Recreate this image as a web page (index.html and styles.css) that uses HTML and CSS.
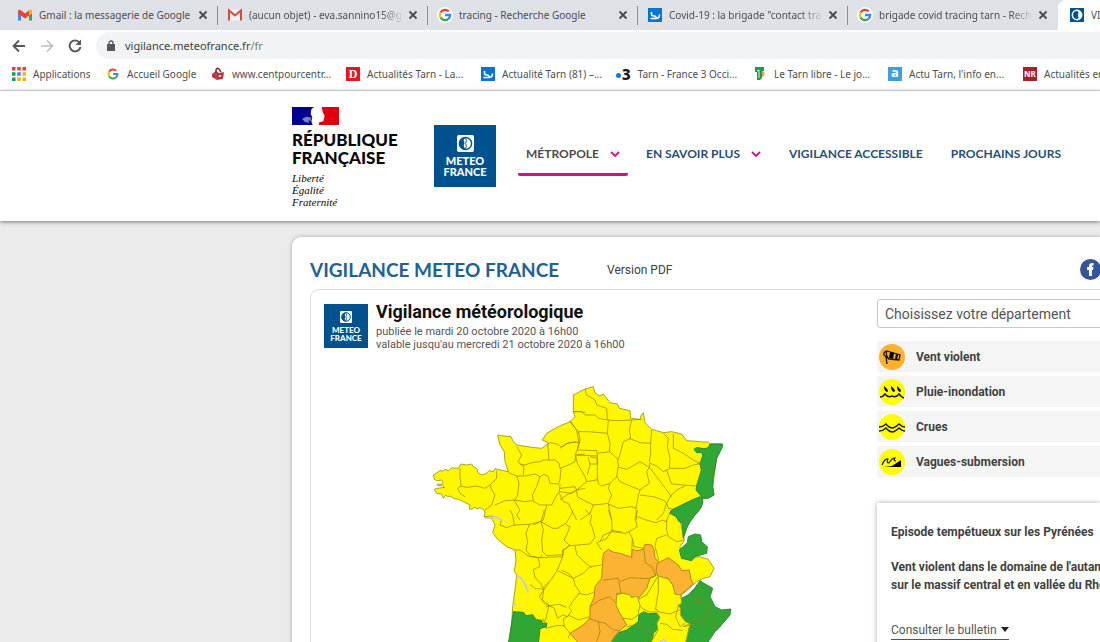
FILE: index.html
```html
<!DOCTYPE html>
<html lang="fr">
<head>
<meta charset="utf-8">
<title>Vigilance Météo France</title>
<link rel="stylesheet" href="styles.css">
</head>
<body>
<svg class="defs" width="0" height="0" aria-hidden="true">
  <symbol id="gmail" viewBox="0 0 14 11"><path d="M0 1.5V11h3V4z" fill="#4285f4"/><path d="M11 4v7h3V1.5z" fill="#34a853"/><path d="M0 1.5Q1-.5 3 1l4 3 4-3q2-1.500 3 .5V4L7 9 0 4z" fill="#ea4335"/><path d="M11 1q2-1.500 3 .5V4l-3 2z" fill="#fbbc04"/></symbol>
  <symbol id="gmail-red" viewBox="0 0 14 11"><path d="M2 0h10v11H2z" fill="#f4f1f1"/><path d="M1 11V1l6 5 6-5v10" fill="none" stroke="#d54b3d" stroke-width="2"/></symbol>
  <symbol id="google" viewBox="0 0 18 18"><circle cx="9" cy="9" r="9" fill="#fff"/><g fill="none" stroke-width="2.600"><path d="M13.200 5A5.800 5.800 0 0 0 4 6.200" stroke="#ea4335"/><path d="M4 6.200a5.800 5.800 0 0 0 0 5.600" stroke="#fbbc05"/><path d="M4 11.800a5.800 5.800 0 0 0 8.800 1.600" stroke="#34a853"/><path d="M12.800 13.400A5.800 5.800 0 0 0 14.800 9H9" stroke="#4285f4"/></g></symbol>
  <symbol id="depeche" viewBox="0 0 14 14"><path d="M0 0h14v14H0z" fill="#0874ce"/><path d="M3.500 4v2q0 2 2.500 2t2 2.500H2.500M8 10.500q3.500 0 3.500-4" fill="none" stroke="#fff" stroke-width="1.600"/></symbol>
  <symbol id="close" viewBox="0 0 10 10"><path d="M1.500 1.500l7 7m0-7l-7 7" stroke="#474b50" stroke-width="1.800"/></symbol>
  <symbol id="meteo" viewBox="0 0 18 18"><rect width="18" height="18" rx="2" fill="#fff"/><circle cx="9" cy="9" r="6.500" fill="none" stroke="#00528f" stroke-width="1.500"/><path d="M9 2.500a6.500 6.500 0 0 0 0 13l-2-4 1-3-1-3z" fill="#00528f"/><path d="M9 3l1 3-1 3 1 3-1 3" fill="none" stroke="#00528f"/></symbol>
  <symbol id="chevron" viewBox="0 0 10 7"><path d="M1 1l4 4 4-4" fill="none" stroke="#d6127f" stroke-width="1.800"/></symbol>
</svg>

<div class="tabs">
  <div class="tab"><svg class="fav"><use href="#gmail"/></svg><span class="label">Gmail : la messagerie de Google</span><button class="x" aria-label="Fermer"><svg><use href="#close"/></svg></button></div>
  <div class="tab"><svg class="fav"><use href="#gmail-red"/></svg><span class="label fade">(aucun objet) - eva.sannino15@g</span><button class="x" aria-label="Fermer"><svg><use href="#close"/></svg></button></div>
  <div class="tab"><svg class="fav google"><use href="#google"/></svg><span class="label">tracing - Recherche Google</span><button class="x" aria-label="Fermer"><svg><use href="#close"/></svg></button></div>
  <div class="tab"><svg class="fav"><use href="#depeche"/></svg><span class="label fade">Covid-19 : la brigade "contact tra</span><button class="x" aria-label="Fermer"><svg><use href="#close"/></svg></button></div>
  <div class="tab"><svg class="fav google"><use href="#google"/></svg><span class="label fade">brigade covid tracing tarn - Rech</span><button class="x" aria-label="Fermer"><svg><use href="#close"/></svg></button></div>
  <div class="tab active"><svg class="fav" viewBox="0 0 18 18"><path d="M0 0h18v18H0z" fill="#00528f"/><circle cx="9" cy="9" r="6" fill="none" stroke="#fff" stroke-width="2"/><path d="M9 3a6 6 0 0 1 0 12l2-3-1-3 1-3z" fill="#fff"/></svg><span class="label">VIGILANCE</span></div>
</div>
<div class="toolbar">
  <button aria-label="Retour"><svg width="14" height="14" viewBox="0 0 14 14"><path d="M13 7H2m5-5.500L1.500 7 7 12.500" fill="none" stroke="#54585c" stroke-width="1.800"/></svg></button>
  <button aria-label="Avancer"><svg width="14" height="14" viewBox="0 0 14 14"><path d="M1 7h11M7 1.500L12.500 7 7 12.500" fill="none" stroke="#bcbec0" stroke-width="1.600"/></svg></button>
  <button aria-label="Actualiser"><svg width="14" height="14" viewBox="0 0 14 14"><path d="M11.500 3.500A5.500 5.500 0 1 0 12.500 8" fill="none" stroke="#54585c" stroke-width="1.900"/><path d="M13 .5V6H7.500z" fill="#54585c"/></svg></button>
  <div class="address"><svg width="8" height="11" viewBox="0 0 8 11"><path d="M0 4h8v7H0z" fill="#54585c"/><path d="M2 5V3a2 2 0 0 1 4 0v2" fill="none" stroke="#54585c" stroke-width="1.300"/></svg><span>vigilance.meteofrance.fr<i>/fr</i></span></div>
</div>
<nav class="bookmarks" aria-label="Favoris">
  <a href="#"><svg viewBox="0 0 12 12"><g fill="#db4437"><path d="M0 0h3v3H0zM4.500 0h3v3h-3zM9 0h3v3H9z"/></g><g fill="#0f9d58"><path d="M0 4.500h3v3H0zM0 9h3v3H0z"/></g><path d="M4.500 4.500h3v3h-3z" fill="#4285f4"/><path d="M9 4.500h3v3H9zM4.500 9h3v3h-3zM9 9h3v3H9z" fill="#f4b400"/></svg>Applications</a>
  <a href="#"><svg><use href="#google"/></svg>Accueil Google</a>
  <a href="#"><svg viewBox="0 0 14 14"><path d="M1 7l4-3 3 2 5-1-1 7-6 1-5-3z" fill="#c83b40"/><path d="M5 6V3q1-3 3-1l2 3" fill="none" stroke="#842a35" stroke-width="1.500"/><path d="M2 9l2 1M7 8l4-1v3L7 11z" fill="#f3c9c5" stroke="#6f3139"/></svg>www.centpourcentr...</a>
  <a href="#"><span class="badge red">D</span>Actualités Tarn - La...</a>
  <a href="#"><svg><use href="#depeche"/></svg>Actualité Tarn (81) –...</a>
  <a href="#"><span class="three">3</span>Tarn - France 3 Occi...</a>
  <a href="#"><svg viewBox="0 0 14 14"><path d="M2 0h9v4H9v7l-2 2H4V5H2z" fill="#169c53"/><path d="M9 4q4 1 2 5l-2 1z" fill="#eda33e"/><path d="M4 4l2-1v8" fill="none" stroke="#d8f2e2"/></svg>Le Tarn libre - Le jo...</a>
  <a href="#"><span class="badge blue">a</span>Actu Tarn, l'info en...</a>
  <a href="#"><span class="badge nr">NR</span>Actualités en direct</a>
</nav>

<header class="site-head">
  <div class="republic">
    <svg width="47" height="18" viewBox="0 0 141 54"><path d="M0 0h141v54H0z" fill="#fff"/><path d="M0 0h66l-8 7-2 14 5 10-3 12 4 11H0z" fill="#000091"/><path d="M30 36l12-7 18 3-5 5 5 5-11-2 4 7-15-2-4-5z" fill="#7d80c8"/><path d="M89 0h52v54H80l2-8 12-3 2-9 2-7-6-12z" fill="#e1000f"/></svg>
    <strong>RÉPUBLIQUE<br>FRANÇAISE</strong>
    <em>Liberté<br>Égalité<br>Fraternité</em>
  </div>
  <div class="logo"><svg><use href="#meteo"/></svg>METEO<br>FRANCE</div>
  <nav class="menu">
    <a href="#" class="current">MÉTROPOLE<svg><use href="#chevron"/></svg></a>
    <a href="#">EN SAVOIR PLUS<svg><use href="#chevron"/></svg></a>
    <a href="#">VIGILANCE ACCESSIBLE</a>
    <a href="#">PROCHAINS JOURS</a>
  </nav>
</header>

<main class="card">
  <div class="card-head">
    <h1>VIGILANCE METEO FRANCE</h1>
    <a href="#" class="pdf">Version PDF</a>
    <a href="#" class="fb" aria-label="Facebook"><svg width="21" height="21" viewBox="0 0 21 21"><circle cx="10.500" cy="10.500" r="10.500" fill="#36549a"/><path d="M9 17v-6H7V8h2V7q0-3.500 4.500-3V6.500Q12 6.200 12 7.500V8h1.500L13 11h-1v6z" fill="#fff"/></svg></a>
  </div>
  <div class="panel">
    <section class="left">
      <div class="map-head">
        <div class="logo small"><svg><use href="#meteo"/></svg>METEO<br>FRANCE</div>
        <div><h2>Vigilance météorologique</h2><p>publiée le mardi 20 octobre 2020 à 16h00<br>valable jusqu'au mercredi 21 octobre 2020 à 16h00</p></div>
      </div>
      <svg class="map" viewBox="0 0 945 792" role="img" aria-label="Carte de vigilance">
        <path class="y" d="M445 45L480 27 505 20 510 38 523 48 535 42 555 68 577 72 583 85 615 92 617 115 645 118 649 105 655 98 660 128 680 148 695 152 715 158 740 155 770 162 785 182 815 184 835 186 850 186 855 192 892 192 875 235 863 320 867 345 833 355 833 368 827 385 810 405 795 425 787 440 775 465 778 482 765 500 770 535 825 530 850 538 867 565 855 590 835 595 815 605 770 645 765 800 250 800 260 730 263 680 270 630 275 585 268 575 273 540 270 510 245 500 220 480 203 458 210 435 200 415 177 410 180 400 178 390 165 383 156 387 150 381 141 388 133 387 135 375 115 365 100 358 88 356 75 348 68 350 62 345 55 355 50 342 35 340 28 328 38 325 58 322 52 316 38 317 38 312 50 313 55 310 50 300 35 302 28 298 26 285 45 272 55 273 60 268 70 272 80 264 100 265 108 252 125 255 140 252 145 260 155 265 160 279 170 285 185 280 192 272 205 275 210 266 218 268 235 272 250 275 240 245 238 215 225 195 218 165 235 168 258 170 265 185 275 195 290 197 320 202 350 205 368 192 370 188 352 180 365 160 400 140 435 125 450 110 445 95z"/>
        <g class="lines">
          <path d="M445 95l20 0 15 2M435 125l20 25 7 40-7 25-5 10M368 192l10-4 20 5 12 8 20-12 15-2 20 0M368 192l4 48M275 200l15 25-10 20 5 7 15 3 20-7 25-3 10-5 17 0 18 0 12 10 3 15 25-10 20-10 2-20 28-3M285 252l12 8-2 25M250 278l25 10 25 0 30-6 15 8 12-7 13 7 5 20 25 2 5-12 3-35M345 290l-10 30-13 25 3 17M275 288l7 22-4 35-10 17M215 272v23l-20 20M105 265v25l3 28 17 4 30-4 25 7 15-10 3 10 12 20-10 30-20 15M108 318l-10 7 7 15 15 10M210 375l30-13 28-2 32 5 22-3 23 13 35 0 15-30 8-10 2-23M268 362l17 28-10 15 10 15M365 375l-10 45-30 15M403 335l37 5 15-10 25-5M403 340l12 25 15 5 25 50"/>
          <g transform="translate(405 0)"><path d="M75 27l5 18 25 15 5 15 30 10 2 35M40 95l25 0 10 10 30 0 10 10 27 5 33 2 40-2 30-2M30 122l20 28 5 5 30 0 57 5 3-40M55 155l5 25-8 30 58 2 2 16-62-3M142 160l8 30-2 25-36 5M148 215l24 20 3 25-5 30M215 120l-7 30 4 25-22 10-5 20-10 35M208 175l32 13 32 2 3-40M272 190v30l-4 25M175 262l25 6 15-8 25-15 28 17 2-12M310 160l15 15-3 25 8 35-2 30M340 162v43l30 15 30 20 20 10M268 248l22 10 20 17 20-10 45 0 25-10 25-5M0 205l20-15 30-5M47 228l5 22 23 40 5 15M85 232l5 23-8 30M90 230l22 5v17H88M112 228v67l-2 5-30 5M112 295l3 15 10 8 25-8 22-22M170 290l10 15 35 15 25 10 10-8 18-12-8-35 8-13M45 320l5 10 30-25M50 330l2 20 18 10 30 15 45-5 10-25-10-20 5-15M145 372l30 13 40-5 13 5 7-40 5-15M268 262l22 28 15 20 15 20 15 20M240 345l40 5 30 10 10 10M320 270l10 30 5 12 35 3 40 3 5-18M320 370l12-22 18-18 25-12M320 370l5 15 20 3M0 325l45-5M0 360l20-15 30-15M100 375l-10 25-30 20M145 372l10 48M228 385l2 35M320 370l-10 30-20 20"/></g>
          <g transform="translate(165 390)"><path d="M12 20l25-2 28 10-5 17 20 8 23-8-5-30-8-15M103 45l45-2 35-8 10-35M148 43l-10 27 5 25-5 25 15 20 28 3 5-8M183 35l7 25-5 30 3 35 12 12 50-3 0-12 20-17M183 35l35 20 15 0 25-15 15-25 6-15M258 45l12 5-10 25-8 15 18 17 35-3 25-2 15-20-8-30-7-15 5-20-20-18M350 98l30-12 15-25 30 5M350 98l15 22M105 120l15 0 25 18 30 5 5 27-20 8 5 25 17 17 8 18-25-3-15-12M180 143l68-3-18 45-18 25-20 20M248 140l0-20 22-13M245 180l20 10 15 15 30-15 20-20 35-5M285 108l5 25 20 20 25 20M235 183l45 22 5 20 15 22-20 25-13 20 8 10-12 18-15-5-15 10-10-30-30-15-15-20 20-30 10-12M192 230l-5 40 20 15-10 45-15 8M197 290l40-8 22 10M187 325l10 15 1 15 30-8 25 0-3-20 15-10M250 345l20 25-5 15M265 315l30 15 34-10M295 250l25 5 25-10"/></g>
          <g transform="translate(525 390)"><path d="M25 0l10 30 2 35-27 10-10 20M37 65l40 5 10-5 25-15-7-25 8-25M87 65l10 20-2 55M97 85l5 25 30 5M113 20l25 10 30 8 20-8 10 5 15-35M200 30l0 30 5 20 25 15 22-5M200 75l-30 10-5 25 10 35-7 20 10 5M220 0l5 20 15 10 10 50M180 340l20 3 18 15 30 3 10-10M195 315l5 15"/></g>
        </g>
        <g class="g">
          <path d="M855 192L892 192 892 202 875 235 870 262 865 290 863 320 867 345 850 355 833 355 829 349 813 330 817 310 829 270 825 250 834 225 828 217 815 218 807 208 815 202 835 206 849 204z"/>
          <path d="M790 365l12-6 23-9 8 5v13l-6 17-17 20-15 20-8 15-12 35-3-45-12-7-5-13-20-10 5-10z"/>
          <path d="M763 510l24-22 3-18 20-8 17 3 3 20 17 15-2 20-20 5-15 5-10 12-30-7z"/>
          <path d="M756 675l14-20 22-12 18-20 15-21 15 10 23 13-8 25 15 30 20 10 27-3-2 18-30 35-15 15-25 37H775l5-56-15-20 5-20z"/>
          <path d="M545 792l35-34 25-8 35-25 2-20 13-10 15 6 30-1 8 25-8 20-15 15-4 26-21-3-20 9z"/>
          <path d="M265 695l30 2 8 10 20-3 10 15 17 2 1 10 15-2-2 11-19 6-5 46H250l10-62z"/>
        </g>
        <g class="o">
          <path d="M535 520l15-12 16 9 19 3 35 12 2-24 14 4 19-4 5-15 20 2 7 15 3 25 10 10-3 27-7 16-15 7-10 30-25 30-15-3-25-12h-25v40l15 30 15 25-20 15-20 25-10 17h-91l-29-32 40-25 20-20v-35l13-30 2-30 20-25 2-35z"/>
          <path d="M697 550l33-17 30 22 10 17 23-2 4 25 8 17-20 18-20 15-15-3-7-27-13-20-30-5-7-18z"/>
        </g>
        <path class="y" d="M635 660l30-15 18-30 15-25 2-2 30 9 13 18 7 27 17 3 3 25-10 5 6 10v20l15 20 15 7-5 15-10 45H675l24-41-3-20 9-20-12-15-23-1-15-8-14-12z"/>
        <path class="y" d="M575 645l16-5 24 4 4 9 18-5 8 28-5 20 2 7-20 15-28-3-12-20-9-20z"/>
        <g class="lines" transform="translate(525 390)"><path d="M10 210l45-5 8 45M60 215l30-12 55 3 25-10M132 118l4 40 20 13 10 25M0 270l28-10 20 20M-30 290l30-20M-5 335l20 5 25 20 20 2M-35 325l30 10 5 30-10 30M175 200v45l-8 50 8 12M165 295l10 10 35 7 28-12M180 340l20 3 18 15 30 3M235 285l-8 35 13 30 15-10M245 295l25-15 60-7M330 273l-5 25 15 25 5 40M325 310l-25 18-50 22M250 350l35-8 25-10 18 3 12 20M80 350l25-5 25 10 25 30M305 255l-5 20M300 250l-8 22M292 -140l23 15 25 10"/></g>
        <path class="coast" d="M275 585l17 13 10 20 8 20M180 415l32-4 20 10M263 677l12-5M705 784l12-5 6 7"/>
      </svg>
    </section>
    <section class="right">
      <select aria-label="Département"><option>Choisissez votre département</option></select>
      <ul>
        <li><svg viewBox="0 0 26 26"><circle cx="13" cy="13" r="13" fill="#fdb12d"/><g fill="none" stroke="#171717" stroke-width="1.300"><path d="M8 7l13 4-1 5-10-1-5-4q-1-3 3-4zM8 7q-2 4 2 8M7 13l1 7"/></g><path d="M11 8l4 1-1 6-4-1zM17 10l2 1-1 5-2-1z"/></svg>Vent violent</li>
        <li><svg viewBox="0 0 26 26"><circle cx="13" cy="13" r="13" fill="#ff0"/><path d="M5 7q6 5 3 6-3-1-3-6M12 7q6 5 3 6-3-1-3-6M18 7q6 5 3 6-3-1-3-6"/><path d="M1 18q3 0 5-3 3 4 7 2 4 2 7-2 2 3 5 4" fill="none" stroke="#171717" stroke-width="1.400"/></svg>Pluie-inondation</li>
        <li><svg viewBox="0 0 26 26"><circle cx="13" cy="13" r="13" fill="#ff0"/><path d="M0 13q4 0 7-3 3 4 7 4 3-1 6-4 3 3 6 3M0 17q4 0 7-3 3 4 7 4 3-1 6-4 3 3 6 3" fill="none" stroke="#171717" stroke-width="1.400"/></svg>Crues</li>
        <li><svg viewBox="0 0 26 26"><circle cx="13" cy="13" r="13" fill="#ff0"/><path d="M5 18l8-1 9-6v7z"/><path d="M3 16q3-7 6-6-2 4 1 4 3-5 6-5-2 3 1 3" fill="none" stroke="#171717" stroke-width="1.200"/></svg>Vagues-submersion</li>
      </ul>
      <article>
        <p>Episode tempétueux sur les Pyrénées</p>
        <p>Vent violent dans le domaine de l'autan,<br>sur le massif central et en vallée du Rhône</p>
        <button>Consulter le bulletin <svg width="8" height="5" viewBox="0 0 8 5"><path d="M0 0h8L4 5z" fill="#222"/></svg></button>
      </article>
    </section>
  </div>
</main>
</body>
</html>
```
FILE: styles.css
```css
* { box-sizing: border-box; }
body { margin: 0; height: 100vh; overflow: hidden; background: #ebebeb; font-family: Roboto, sans-serif; color: #414141; white-space: nowrap; }
a { color: inherit; text-decoration: none; }
button { border: 0; background: none; padding: 0; font: inherit; color: inherit; }
h1, h2, p, ul { margin: 0; padding: 0; }
svg { display: block; flex: none; }
.defs { position: absolute; }

.tabs { display: flex; height: 30px; padding-left: 8px; background: #dee1e6; font: 10px "Noto Sans", sans-serif; color: #4c4f53; overflow: hidden; }
.tab { display: flex; flex: none; align-items: center; width: 210px; padding: 0 9px 0 10px; border-right: 1px solid transparent; border-image: linear-gradient(transparent 22%, #8b8e93 22%, #8b8e93 80%, transparent 80%) 1; }
.tab:nth-last-child(-n+2) { border-image: none; }
.fav { width: 14px; height: 14px; margin-right: 7px; }
.fav.google { width: 16px; height: 16px; margin-left: -1px; margin-right: 6px; }
.label { flex: 1; overflow: hidden; }
.fade { -webkit-mask-image: linear-gradient(90deg, #000 85%, transparent); mask-image: linear-gradient(90deg, #000 85%, transparent); }
.x { margin-left: 4px; }
.x svg { width: 10px; height: 10px; }
.active { background: #fff; border-radius: 8px 0 0 0; padding-left: 12px; }
.toolbar { display: flex; align-items: center; gap: 14px; height: 31px; padding-left: 12px; background: #fff; }
.address { flex: 1; display: flex; align-items: center; gap: 10px; height: 27px; padding-left: 11px; border-radius: 14px 0 0 14px; background: #f1f3f4; font: 11px "Noto Sans", sans-serif; color: #3d4043; }
.address i { font-style: normal; color: #777b80; }
.bookmarks { display: grid; grid-template-columns: 94px 105px 135px 135px 135px 137px 135px 135px 200px; height: 30px; padding: 0 0 4px 12px; align-items: center; background: #fff; border-bottom: 1px solid #d9dadb; font: 10px "Noto Sans", sans-serif; color: #4c4f53; overflow: hidden; }
.bookmarks a { display: flex; align-items: center; gap: 7px; }
.bookmarks svg { width: 14px; height: 14px; }
.badge { width: 14px; height: 14px; color: #fff; text-align: center; line-height: 14px; font-weight: 700; }
.red { background: #e9141d; font-family: "Liberation Serif", serif; font-size: 12px; }
.blue { background: #3e9fe0; font-size: 13px; line-height: 11px; }
.nr { background: #a91e28; font-size: 8px; }
.three { color: #171717; font-size: 15px; line-height: 14px; font-weight: 800; display: flex; align-items: center; gap: 1px; }
.three::before { content: ""; width: 5px; height: 5px; margin-top: 4px; border-radius: 50%; background: #087be0; }

.site-head { display: flex; height: 130px; padding-left: 292px; background: #fff; box-shadow: 0 1px 4px #777; position: relative; }
.republic { width: 142px; padding-top: 16px; color: #080808; }
.republic strong { display: block; margin-top: 6px; font: 900 17px/18px Lato, sans-serif; }
.republic em { display: block; margin-top: 5px; font: italic 11px/12px "Liberation Serif", serif; }
.logo { display: flex; flex-direction: column; align-items: center; justify-content: center; flex: none; width: 62px; height: 62px; margin-top: 34px; background: #00528f; color: #fff; font: 900 11px/11px Lato, sans-serif; text-align: center; }
.logo svg { width: 17px; height: 17px; margin-bottom: 3px; }
.menu { display: flex; align-items: flex-start; gap: 28px; padding: 49px 0 0 22px; font: 700 12px/28px Lato, sans-serif; color: #244f78; }
.menu a { display: flex; align-items: center; height: 36px; padding-bottom: 8px; }
.menu svg { width: 10px; height: 7px; margin-left: 11px; }
.menu .current { color: #4b4b4b; padding: 0 8px 5px; margin-right: -10px; border-bottom: 3px solid #cf1482; border-radius: 2px; }

.card { margin: 16px 0 0 292px; min-height: 440px; padding-left: 18px; background: #fff; border-radius: 9px 0 0 0; box-shadow: 0 0 4px #aaa; }
.card-head { display: flex; align-items: center; height: 52px; padding-top: 13px; }
h1 { width: 297px; color: #1f6098; font: 700 19px/24px Lato, sans-serif; }
.pdf { flex: 1; font-size: 12px; }
.fb { margin-right: -1px; }
.panel { display: grid; grid-template-columns: 1fr 223px; border: 1px solid #dadada; border-width: 1px 0 0 1px; border-radius: 9px 0 0 0; }
.map-head { display: flex; gap: 8px; padding: 14px 0 0 13px; }
.logo.small { width: 44px; height: 44px; margin: 0; font-size: 8px; line-height: 8px; }
.small svg { width: 12px; height: 12px; }
h2 { margin-top: -4px; font: 700 18px/24px Roboto, sans-serif; color: #111; }
.map-head p { margin-top: 1px; font-size: 11px; line-height: 13px; color: #555; }
.map { width: 315px; height: 264px; margin: 29px 0 0 114px; overflow: hidden; }
.map path { stroke-linejoin: round; }
.y { fill: #fff700; stroke: #a8a51e; stroke-width: 3; }
.g path { fill: #30a635; stroke: #278c30; stroke-width: 3; }
.o path { fill: #fcb232; stroke: #b98424; stroke-width: 3; }
.lines { fill: none; stroke: #8d7c13; stroke-width: 3; stroke-opacity: .65; }
.map .coast { fill: none; stroke: #ccc; stroke-width: 6; }
.right { padding: 9px 0 0; min-width: 0; }
select { appearance: none; display: block; width: 240px; height: 29px; padding: 0 7px; border: 1px solid #c9c9c9; border-radius: 3px; background: #fff; color: #555; font: 14px Roboto, sans-serif; }
ul { list-style: none; display: grid; gap: 4px; margin-top: 13px; }
li { display: flex; align-items: center; gap: 11px; height: 31px; padding-left: 2px; background: #f5f5f5; font-size: 12px; font-weight: 700; }
li svg { width: 26px; height: 26px; }
article { height: 180px; margin-top: 26px; padding: 20px 0 0 14px; box-shadow: 0 0 5px #aaa; font-size: 12px; line-height: 18px; font-weight: 700; }
article p + p { margin-top: 17px; }
article button { display: flex; align-items: center; gap: 4px; height: 20px; margin-top: 26px; border-bottom: 1px solid #555; font-size: 12px; font-weight: 400; color: #555; }
```
